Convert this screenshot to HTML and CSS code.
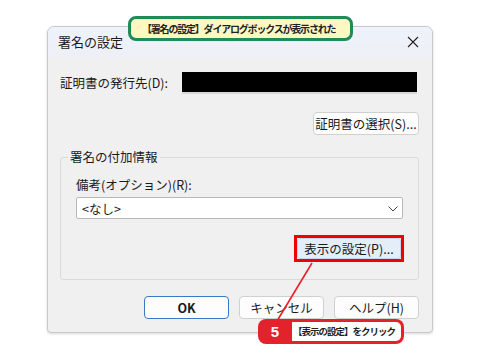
FILE: index.html
```html
<!DOCTYPE html>
<html lang="ja">
<head>
<meta charset="utf-8">
<link rel="stylesheet" href="styles.css">
</head>
<body>
<div class="page">
  <div class="dialog">
    <div class="titlebar">
      <span class="title">署名の設定</span>
      <svg class="close" width="12" height="12" viewBox="0 0 12 12"><path d="M1 1L11 11M11 1L1 11" stroke="#222" stroke-width="1.1" fill="none"/></svg>
    </div>
    <div class="content">
      <div class="row-issuer">
        <span class="label">証明書の発行先(D):</span>
        <div class="blackbox"></div>
      </div>
      <div class="row-right">
        <button class="btn btn-select">証明書の選択(S)...</button>
      </div>
      <fieldset class="group">
        <legend>署名の付加情報</legend>
        <div class="label note">備考(オプション)(R):</div>
        <div class="combo">
          <span>&lt;なし&gt;</span>
          <svg width="10" height="6" viewBox="0 0 10 6"><path d="M0.5 0.5L5 5L9.5 0.5" stroke="#444" stroke-width="1" fill="none"/></svg>
        </div>
        <div class="row-right">
          <div class="highlight">
            <button class="btn btn-display">表示の設定(P)...</button>
          </div>
        </div>
      </fieldset>
      <div class="actions">
        <button class="btn btn-ok">OK</button>
        <button class="btn btn-action">キャンセル</button>
        <button class="btn btn-action">ヘルプ(H)</button>
      </div>
    </div>
  </div>

  <div class="callout-top">【署名の設定】ダイアログボックスが表示された</div>

  <svg class="leader" width="480" height="360" viewBox="0 0 480 360"><path d="M312 263L277 321" stroke="#e8202a" stroke-width="1.6" fill="none"/></svg>

  <div class="callout-step">
    <span class="num">5</span>
    <span class="step-text">【表示の設定】をクリック</span>
  </div>
</div>
</body>
</html>
```
FILE: styles.css
```css
* { box-sizing: border-box; }
html, body { margin: 0; padding: 0; background: #fff; }
body {
  font-family: "Noto Sans CJK JP", "Noto Sans", sans-serif;
  color: #1a1a1a;
}
.page {
  position: relative;
  width: 480px;
  height: 360px;
  overflow: hidden;
  padding: 26px 0 0 47px;
}
.dialog {
  width: 386px;
  height: 307px;
  background: #f0f0f0;
  border: 1px solid #c9c9c9;
  border-radius: 7px 7px 4px 4px;
  overflow: hidden;
  box-shadow: 0 1px 3px rgba(0,0,0,0.15);
}
.titlebar {
  height: 30px;
  background: linear-gradient(#eef2fa, #edf0f6);
  display: flex;
  align-items: center;
  justify-content: space-between;
  padding: 0 13px 0 10px;
}
.title { font-size: 13px; line-height: 18px; }
.content {
  padding: 15px 13px 0 12px;
  font-size: 12.5px;
}
.label { font-size: 12.5px; line-height: 18px; }
.row-issuer {
  display: flex;
  align-items: center;
  justify-content: space-between;
  padding-right: 2px;
}
.blackbox {
  width: 235px;
  height: 22px;
  background: #000;
  border-bottom: 2px solid #d8d8d8;
}
.row-right {
  display: flex;
  justify-content: flex-end;
}
.btn {
  font-family: "Noto Sans CJK JP", "Noto Sans", sans-serif;
  font-size: 12.5px;
  color: #1a1a1a;
  background: #fdfdfd;
  border: 1px solid #d0d0d0;
  border-radius: 4px;
  height: 23px;
  padding: 0;
  line-height: 20px;
}
.btn-select {
  margin-top: 18px;
  width: 106px;
}
.group {
  margin: 13px 0 0 0;
  padding: 0 15px 17px 15px;
  border: 1px solid #dadada;
  border-radius: 3px;
}
.group legend {
  font-size: 12.5px;
  line-height: 18px;
  padding: 0 2px;
  margin-left: -8px;
}
.note { margin-top: 10px; }
.combo {
  margin-top: 3px;
  height: 22px;
  background: #fff;
  border: 1px solid #b8b8b8;
  border-radius: 2px;
  display: flex;
  align-items: center;
  justify-content: space-between;
  padding: 0 4px 0 5px;
  font-size: 12.5px;
}
.combo svg { margin-top: 1px; }
.highlight {
  margin-top: 16px;
  margin-right: -1px;
  border: 3px solid #f00000;
  display: flex;
}
.btn-display {
  width: 104px;
  height: 21px;
  line-height: 18px;
  background: #e3eef9;
  border-color: #c4d6ea;
  border-radius: 3px;
}
.actions {
  display: flex;
  justify-content: flex-end;
  gap: 10px;
  margin-top: 16px;
}
.actions .btn { width: 85px; }
.btn-ok {
  border: 1.5px solid #3a78c8;
  font-weight: bold;
}

.callout-top {
  position: absolute;
  left: 128px;
  top: 16px;
  width: 225px;
  height: 25px;
  background: #fdf8c2;
  border: 3px solid #1d8c5c;
  border-radius: 8px;
  font-size: 10px;
  letter-spacing: -1.2px;
  font-weight: bold;
  line-height: 19px;
  padding-left: 11px;
  color: #222;
  white-space: nowrap;
}
.leader {
  position: absolute;
  left: 0;
  top: 0;
}
.callout-step {
  position: absolute;
  left: 258px;
  top: 319px;
  width: 146px;
  height: 25px;
  background: #e3232c;
  border-radius: 8px;
  display: flex;
  align-items: center;
  padding: 3px 3px 3px 0;
}
.num {
  flex: none;
  width: 34px;
  text-align: center;
  color: #fff;
  font-family: "Liberation Sans", sans-serif;
  font-weight: bold;
  font-size: 15px;
}
.step-text {
  flex: 1;
  height: 19px;
  background: #fff;
  border-radius: 0 5px 5px 0;
  font-size: 9.5px;
  letter-spacing: -1px;
  font-weight: bold;
  line-height: 19px;
  padding-left: 1px;
  color: #222;
  white-space: nowrap;
}
```
